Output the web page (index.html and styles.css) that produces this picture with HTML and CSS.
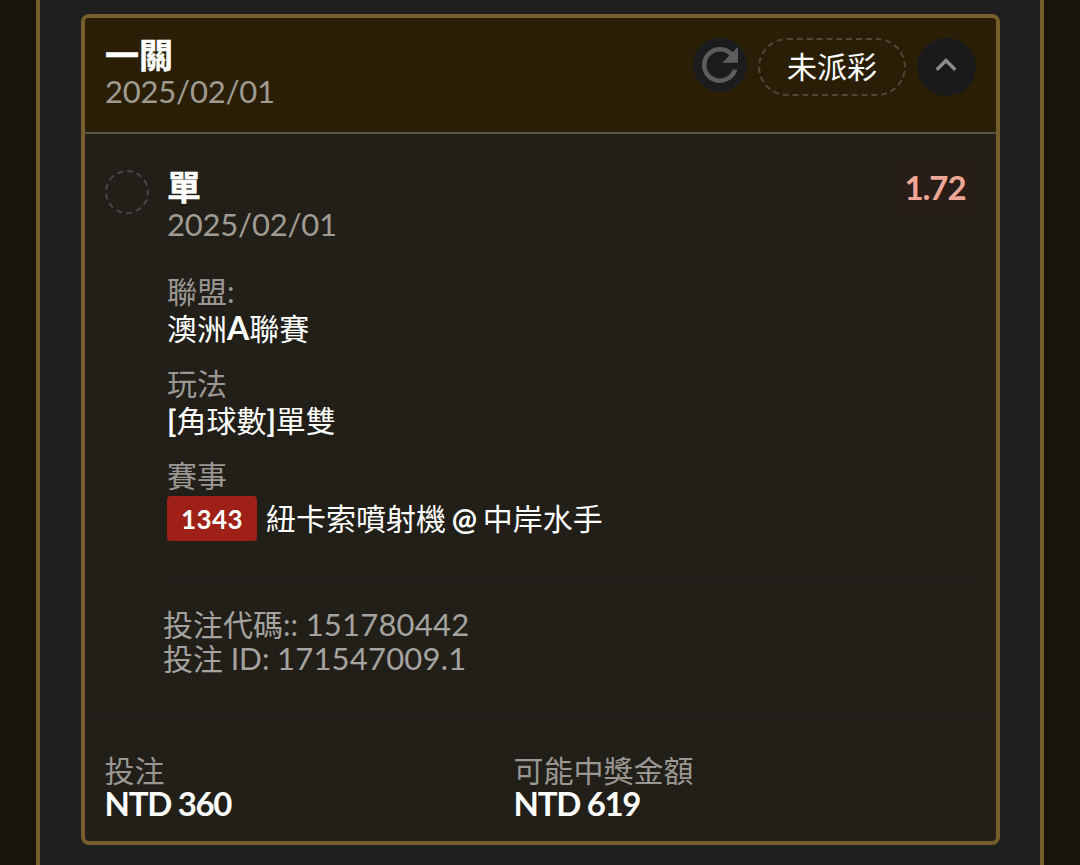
FILE: index.html
```html
<!DOCTYPE html>
<html lang="zh-Hant">

<head>
    <meta charset="UTF-8">
    <meta name="viewport" content="width=device-width, initial-scale=1.0">
    <title>投注</title>
    <link rel="stylesheet" href="styles.css">
</head>

<body>
    <main class="panel">
        <article class="card">
            <header class="card-header">
                <div>
                    <h1 class="title">一關</h1>
                    <p class="date">2025/02/01</p>
                </div>
                <div class="actions">
                    <button class="refresh" aria-label="refresh">
                        <svg width="54" height="54" viewBox="0 0 24 24">
                            <path d="M17.65 6.35A7.96 7.96 0 0 0 12 4a8 8 0 1 0 7.73 10h-2.08A6 6 0 1 1 12 6c1.66 0 3.14.69 4.22 1.78L13 11h7V4z" />
                        </svg>
                    </button>
                    <span class="state">未派彩</span>
                    <button class="toggle" aria-label="toggle">
                        <svg width="42" height="42" viewBox="0 0 24 24">
                            <path d="M12 8l-6 6 1.41 1.41L12 10.83l4.59 4.58L18 14z" />
                        </svg>
                    </button>
                </div>
            </header>

            <section class="bet">
                <span class="bet-mark"></span>
                <div class="bet-body">
                    <div class="bet-top">
                        <div>
                            <h2 class="title">單</h2>
                            <p class="date">2025/02/01</p>
                        </div>
                        <span class="odds">1.72</span>
                    </div>
                    <dl class="details">
                        <dt>聯盟:</dt>
                        <dd>澳洲<b class="letter">A</b>聯賽</dd>
                        <dt>玩法</dt>
                        <dd><b>[</b>角球數<b>]</b>單雙</dd>
                        <dt>賽事</dt>
                        <dd class="match"><span class="code">1343</span>紐卡索噴射機 <b>@</b> 中岸水手</dd>
                    </dl>
                    <div class="ids">
                        <p>投注代碼:: <span class="number">151780442</span></p>
                        <p>投注 ID: <span class="number">171547009.1</span></p>
                    </div>
                </div>
            </section>

            <footer class="totals">
                <div>
                    <p class="label">投注</p>
                    <p class="amount">NTD 360</p>
                </div>
                <div>
                    <p class="label">可能中獎金額</p>
                    <p class="amount">NTD 619</p>
                </div>
            </footer>
        </article>
    </main>
</body>

</html>
```
FILE: styles.css
```css
* {
    box-sizing: border-box;
    margin: 0;
    padding: 0;
}

body {
    background-color: #19150e;
    color: #fff;
    font-family: Lato, "Noto Sans CJK TC", sans-serif;
    font-size: 30px;
    overflow: hidden;
}

.panel {
    width: 1008px;
    height: 100vh;
    margin: 0 auto;
    padding: 14px 40px 0 41px;
    border: solid #755e2b;
    border-width: 0 4px;
    background-color: #1f1f1f;
}

.card {
    width: 919px;
    height: 831px;
    border: 4px solid #755e2b;
    border-radius: 8px;
    background-color: #221f19;
    overflow: hidden;
}

.card-header {
    display: flex;
    justify-content: space-between;
    height: 116px;
    padding: 20px 20px 0;
    border-bottom: 2px solid #5a5342;
    background-color: #2a1f06;
}

.title {
    margin-top: -1px;
    font-size: 34px;
    font-weight: 700;
    line-height: 36px;
    -webkit-text-stroke: .5px #fff;
}

.date {
    color: #a09b92;
    font-size: 31px;
    letter-spacing: -.2px;
    line-height: 36px;
}

.bet-top .date {
    margin-top: 1px;
}

.actions {
    display: flex;
    align-items: flex-start;
}

button {
    display: flex;
    align-items: center;
    justify-content: center;
    border: 0;
    border-radius: 50%;
}

.refresh {
    width: 54px;
    height: 54px;
    margin-right: 11px;
    background-color: #1b1c1e;
    fill: #5c5d5e;
}

.state {
    width: 148px;
    height: 58px;
    margin-right: 11px;
    border: 2px dashed #51473a;
    border-radius: 29px;
    line-height: 52px;
    text-align: center;
}

.toggle {
    width: 59px;
    height: 58px;
    padding: 0 1px 4px 0;
    background-color: #1a1a1b;
    fill: #8b8b8b;
}

.bet {
    display: flex;
    gap: 18px;
    height: 582px;
    padding: 36px 20px 0;
    border-bottom: 2px solid #25221d;
}

.bet-mark {
    width: 44px;
    height: 44px;
    border: 2px dashed #4b4843;
    border-radius: 50%;
}

.bet-body {
    flex: 1;
}

.bet-top {
    display: flex;
    justify-content: space-between;
    align-items: flex-start;
    height: 72px;
}

.odds {
    width: 80px;
    height: 55px;
    margin-top: -9px;
    padding-right: 2px;
    background-color: #291e17;
    color: #eea796;
    font-size: 33px;
    font-weight: 700;
    letter-spacing: -1.1px;
    line-height: 53px;
    text-align: center;
}

.details {
    height: 337px;
    margin-right: 5px;
    padding-top: 31px;
    border-bottom: 2px solid #25221d;
}

.details dt {
    color: #9a9792;
    line-height: 36px;
}

.details dd {
    margin-bottom: 18px;
    line-height: 38px;
}

.details .letter {
    font-size: 32px;
    line-height: 1;
}

.details .match {
    display: flex;
    align-items: center;
    height: 45px;
    margin-top: 3px;
    line-height: 42px;
    padding-bottom: 1px;
    white-space: pre;
    word-spacing: -2px;
}

.code {
    width: 90px;
    height: 45px;
    margin: 1px 9px 0 0;
    border-radius: 4px;
    background-color: #9e2016;
    font-size: 26px;
    font-weight: 700;
    letter-spacing: .4px;
    line-height: 46px;
    text-align: center;
}

.ids {
    margin-left: -4px;
    padding-top: 28px;
    color: #a5a39f;
    line-height: 34px;
}

.number {
    font-size: 31px;
    letter-spacing: .2px;
    line-height: 1;
}

.totals {
    display: grid;
    grid-template-columns: 409px 1fr;
    padding: 37px 20px 0;
}

.label {
    margin-left: -.5px;
    color: #9a9792;
    line-height: 34px;
}

.amount {
    margin: -1px 0 0 -.5px;
    font-size: 33px;
    font-weight: 700;
    letter-spacing: -1.3px;
    line-height: 34px;
}
```
